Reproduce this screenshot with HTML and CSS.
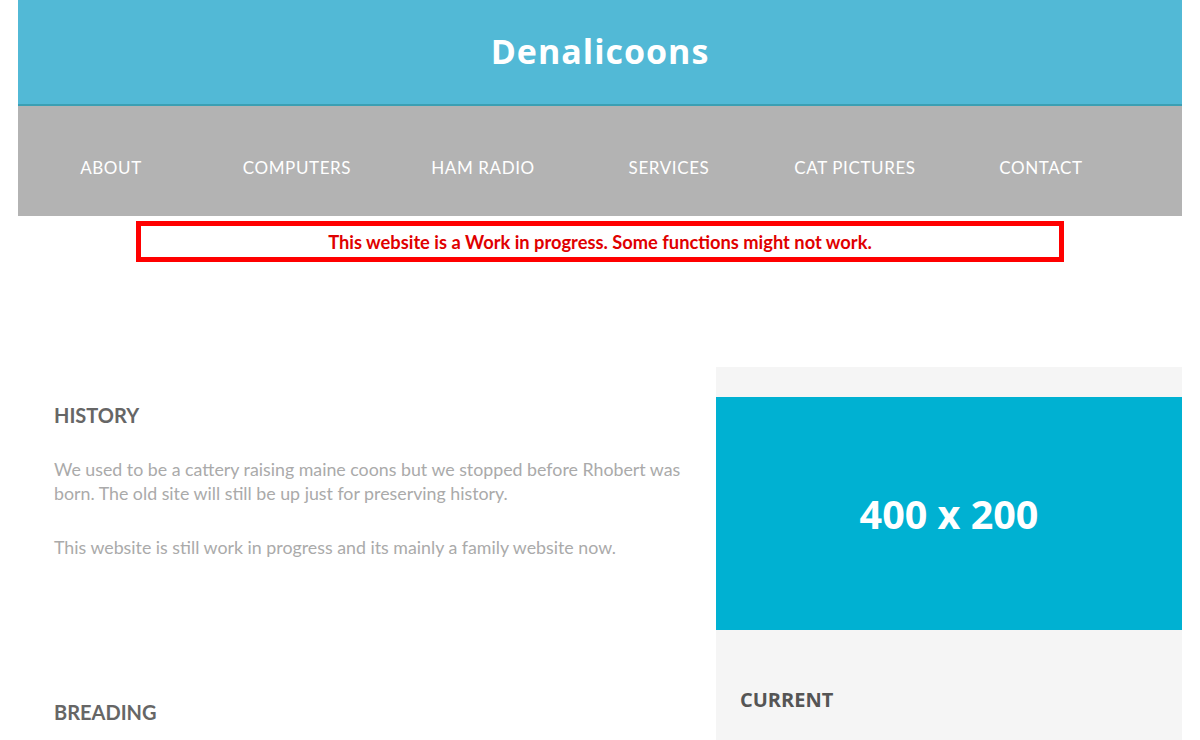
FILE: index.html
```html
<!DOCTYPE html>
<html lang="en">
<head>
<meta charset="utf-8">
<title>Denalicoons</title>
<link rel="stylesheet" href="styles.css">
</head>
<body>
<div class="page">
  <header class="masthead">
    <h1 class="site-title">Denalicoons</h1>
  </header>
  <nav class="menu">
    <a class="menu-item" href="#">ABOUT</a>
    <a class="menu-item" href="#">COMPUTERS</a>
    <a class="menu-item" href="#">HAM RADIO</a>
    <a class="menu-item" href="#">SERVICES</a>
    <a class="menu-item" href="#">CAT PICTURES</a>
    <a class="menu-item" href="#">CONTACT</a>
  </nav>
  <div class="notice">This website is a Work in progress. Some functions might not work.</div>
  <main class="content">
    <div class="main-col">
      <section class="block">
        <h2 class="block-title">HISTORY</h2>
        <p class="text">We used to be a cattery raising maine coons but we stopped before Rhobert was born. The old site will still be up just for preserving history.</p>
        <p class="text">This website is still work in progress and its mainly a family website now.</p>
      </section>
      <section class="block block-second">
        <h2 class="block-title">BREADING</h2>
      </section>
    </div>
    <aside class="side-col">
      <div class="placeholder">400 x 200</div>
      <h2 class="side-title">CURRENT</h2>
    </aside>
  </main>
</div>
</body>
</html>
```
FILE: styles.css
```css
html, body {
  margin: 0;
  padding: 0;
  background: #ffffff;
}
body {
  font-family: "Open Sans", "Liberation Sans", sans-serif;
}
.page {
  width: 1164px;
  margin: 0 auto;
}
.masthead {
  background: #52b9d6;
  height: 104px;
  border-bottom: 2px solid #3b9fb3;
  display: flex;
  align-items: center;
  justify-content: center;
}
.site-title {
  margin: 0;
  color: #ffffff;
  font-family: "Open Sans", sans-serif;
  font-weight: 700;
  font-size: 34px;
  letter-spacing: 1px;
  line-height: 1;
  padding-bottom: 2px;
}
.menu {
  background: #b3b3b3;
  height: 110px;
  display: flex;
  box-sizing: border-box;
  padding-top: 50px;
}
.menu-item {
  width: 186px;
  text-align: center;
  color: #ffffff;
  text-decoration: none;
  font-family: "Lato", sans-serif;
  font-size: 17px;
  letter-spacing: 0.6px;
  line-height: 24px;
  height: 24px;
}
.notice {
  width: 928px;
  box-sizing: border-box;
  margin: 5px auto 0;
  border: 5px solid #ff0000;
  height: 41px;
  color: #e00000;
  font-family: "Lato", sans-serif;
  font-weight: 700;
  font-size: 18.3px;
  display: flex;
  align-items: center;
  justify-content: center;
}
.content {
  margin-top: 105px;
  display: grid;
  grid-template-columns: 698px 466px;
}
.main-col {
  padding: 36px 30px 60px 36px;
}
.block-title {
  margin: 0;
  font-family: "Lato", sans-serif;
  font-weight: 700;
  font-size: 20px;
  line-height: 24px;
  color: #666666;
}
.text {
  margin: 30px 0 0;
  font-family: "Lato", sans-serif;
  font-size: 17.8px;
  line-height: 24px;
  color: #aaaaaa;
}
.text + .text {
  margin-top: 30px;
}
.block-second {
  margin-top: 141px;
}
.side-col {
  background: #f5f5f5;
  padding-top: 30px;
}
.placeholder {
  height: 233px;
  background: #00b1d2;
  color: #ffffff;
  font-family: "Open Sans", sans-serif;
  font-weight: 700;
  font-size: 39.5px;
  display: flex;
  align-items: center;
  justify-content: center;
}
.side-title {
  margin: 58px 0 0 24px;
  font-family: "Open Sans", sans-serif;
  font-weight: 700;
  font-size: 20px;
  line-height: 24px;
  color: #555555;
}
```
